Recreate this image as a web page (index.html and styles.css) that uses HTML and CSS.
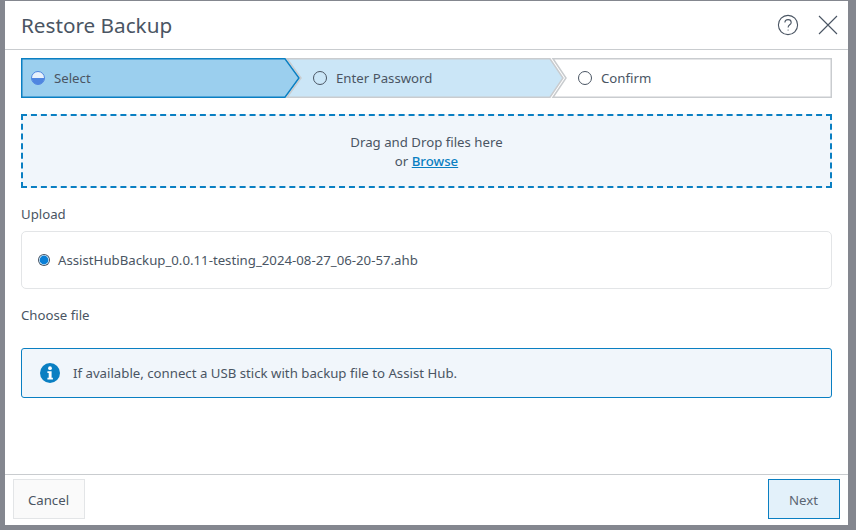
FILE: index.html
```html
<!DOCTYPE html>
<html lang="en">
<head>
<meta charset="utf-8">
<title>Restore Backup</title>
<link rel="stylesheet" href="styles.css">
</head>
<body>
<div class="dialog">
  <header class="head">
    <h1 class="title">Restore Backup</h1>
    <div class="head-icons">
      <svg class="icon-help" width="22" height="22" viewBox="0 0 22 22" fill="none" stroke="#4a5563" stroke-width="1.1">
        <circle cx="11" cy="11" r="9.6"/>
        <path d="M7.9 8.6c0-1.8 1.4-3 3.2-3s3.1 1.1 3.1 2.8c0 2.4-3.1 2.4-3.1 5"/>
        <circle cx="11.1" cy="16" r=".6" fill="#4a5563" stroke="none"/>
      </svg>
      <svg class="icon-close" width="20" height="20" viewBox="0 0 20 20" fill="none" stroke="#4a5563" stroke-width="1.1">
        <path d="M1 1l18 18M19 1L1 19"/>
      </svg>
    </div>
  </header>
  <main class="body">
    <div class="stepper">
      <svg class="stepper-bg" width="811" height="40" viewBox="0 0 811 40">
        <path d="M532 .75H810.25V39.25H532L545 20Z" fill="#fff" stroke="#c9cccf" stroke-width="1.5"/>
        <path d="M266 .75H529L542 20L529 39.25H266L280 20Z" fill="#cbe6f7" stroke="#c9cccf" stroke-width="1.5"/>
        <path d="M.75 .75H264L278 20L264 39.25H.75Z" fill="#9bcfee" stroke="#0a7fc2" stroke-width="1.5"/>
      </svg>
      <div class="step step-1">
        <svg class="radio-half" width="14" height="14" viewBox="0 0 14 14">
          <circle cx="7" cy="7" r="6.5" fill="#e8f1fb" stroke="#4f86e0"/>
          <path d="M.5 7a6.5 6.5 0 0 0 13 0Z" fill="#4f86e0"/>
        </svg>
        <span>Select</span>
      </div>
      <div class="step step-2"><span class="ring"></span><span>Enter Password</span></div>
      <div class="step step-3"><span class="ring"></span><span>Confirm</span></div>
    </div>

    <div class="drop">
      <div>Drag and Drop files here</div>
      <div>or <a class="browse" href="#">Browse</a></div>
    </div>

    <div class="label label-upload">Upload</div>
    <div class="file-box">
      <span class="radio"></span>
      <span>AssistHubBackup_0.0.11-testing_2024-08-27_06-20-57.ahb</span>
    </div>

    <div class="label label-choose">Choose file</div>
    <div class="info">
      <svg class="info-icon" width="20" height="20" viewBox="0 0 20 20">
        <circle cx="10" cy="10" r="10" fill="#0a7fc2"/>
        <circle cx="10" cy="5.2" r="1.9" fill="#fff"/>
        <path d="M7.4 8.2h4.2v6.6h1.3v1.7H7.4v-1.7h1.3V9.9H7.4Z" fill="#fff"/>
      </svg>
      <span>If available, connect a USB stick with backup file to Assist Hub.</span>
    </div>
  </main>
  <footer class="foot">
    <button class="btn btn-cancel">Cancel</button>
    <button class="btn btn-next">Next</button>
  </footer>
</div>
</body>
</html>
```

FILE: styles.css
```css
* { box-sizing: border-box; }
html, body { margin: 0; height: 100%; }
body {
  width: 856px;
  height: 530px;
  overflow: hidden;
  background: #84878f;
  padding: 1px 8px 5px 5px;
  font-family: "Noto Sans", sans-serif;
  font-size: 13.23px;
  line-height: 19px;
  color: #4a5563;
}
.dialog {
  height: 524px;
  background: #fff;
  display: flex;
  flex-direction: column;
}
.head {
  height: 49px;
  flex: none;
  border-bottom: 1px solid #c9cccf;
  display: flex;
  align-items: center;
  justify-content: space-between;
  padding: 0 10px 0 16px;
}
.title {
  margin: 0;
  font-size: 20.7px;
  line-height: 28px;
  font-weight: 400;
  color: #4a5563;
}
.head-icons { display: flex; align-items: center; gap: 19px; }
.icon-help, .icon-close { display: block; }
.body {
  flex: 1;
  padding: 8px 16px 0;
  display: flex;
  flex-direction: column;
}
.stepper {
  position: relative;
  width: 811px;
  height: 40px;
  display: flex;
  flex: none;
}
.stepper-bg { position: absolute; left: 0; top: 0; }
.step {
  position: relative;
  display: flex;
  align-items: center;
  gap: 9px;
}
.step-1 { width: 292px; padding-left: 10px; }
.step-2 { width: 265px; }
.step-3 { flex: 1; }
.radio-half { display: block; flex: none; }
.ring {
  width: 14px;
  height: 14px;
  border: 1px solid #4a5563;
  border-radius: 50%;
  flex: none;
}
.drop {
  margin-top: 16px;
  height: 74px;
  flex: none;
  border: 2px dashed #0a7fc2;
  background: #f1f6fb;
  padding-top: 2px;
  display: flex;
  flex-direction: column;
  align-items: center;
  justify-content: center;
  text-align: center;
}
.browse { color: #0a7fc2; font-weight: 500; text-decoration: underline; }
.label { flex: none; }
.label-upload { margin-top: 17px; }
.file-box {
  margin-top: 7px;
  height: 58px;
  flex: none;
  border: 1px solid #e3e5e7;
  border-radius: 5px;
  display: flex;
  align-items: center;
  padding-left: 16px;
  gap: 8px;
}
.radio {
  width: 10px;
  height: 10px;
  border-radius: 50%;
  background: #0a7fd6;
  box-shadow: inset 0 0 0 .6px #fff, 0 0 0 1px #4a5563;
  flex: none;
  margin: 0 1px 1px;
}
.label-choose { margin-top: 17px; }
.info {
  margin-top: 23px;
  height: 50px;
  flex: none;
  border: 1px solid #0a7fc2;
  border-radius: 3px;
  background: #f1f6fb;
  display: flex;
  align-items: center;
  padding-left: 18px;
  gap: 13px;
}
.info-icon { display: block; flex: none; }
.foot {
  height: 51px;
  flex: none;
  border-top: 1px solid #c9cccf;
  display: flex;
  justify-content: space-between;
  align-items: flex-start;
  padding: 4px 8px 0;
}
.btn {
  width: 72px;
  height: 40px;
  font: inherit;
  color: #4a5563;
  padding: 2px 1px 0 0;
  border-radius: 0;
}
.btn-cancel { background: #fafafa; border: 1px solid #e3e5e7; }
.btn-next { background: #e3f1fa; border: 1px solid #0a7fc2; color: #5b6673; }
```
